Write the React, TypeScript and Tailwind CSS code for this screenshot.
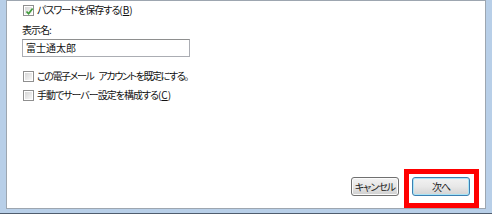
import type { ReactNode } from 'react'

const font = "font-['Noto_Sans_CJK_JP','Noto_Sans',sans-serif] [font-feature-settings:'palt']"

function Check({ checked }: { checked?: boolean }) {
  return (
    <span className="relative w-[11px] h-[11px] shrink-0 border border-[#8f8f8f] bg-white p-[1px]">
      <span className="block w-full h-full bg-gradient-to-br from-[#d6d6d6] to-[#f8f8f8]" />
      {checked && (
        <svg className="absolute left-[1px] top-[1px]" width="9" height="9" viewBox="0 0 9 9">
          <path d="M1.5 4.5 L3.6 6.8 L7.6 1.6" fill="none" stroke="#3f9b3a" strokeWidth="1.7" />
        </svg>
      )}
    </span>
  )
}

function CheckRow({ checked, children }: { checked?: boolean; children: ReactNode }) {
  return (
    <label className="flex items-center h-[18px] ml-[1px] gap-[3px]">
      <Check checked={checked} />
      <span className="leading-none whitespace-nowrap">{children}</span>
    </label>
  )
}

// accelerator key, e.g. (B)
function Key({ k }: { k: string }) {
  return (
    <span className="tracking-normal">
      (<span className="underline">{k}</span>)
    </span>
  )
}

function Btn({ children, main }: { children: ReactNode; main?: boolean }) {
  return (
    <button
      className={
        main
          ? 'w-[58px] h-[19px] whitespace-nowrap rounded-[3px] border border-[#3c7fb1] bg-gradient-to-b from-[#f2f2f2] via-[#e8e8e8] to-[#d3d3d3] shadow-[inset_0_0_0_1px_#a8e4f7] text-[10px] leading-none text-[#222]'
          : 'w-[48px] h-[19px] whitespace-nowrap rounded-[3px] border border-[#707070] bg-gradient-to-b from-[#f2f2f2] via-[#e6e6e6] to-[#cfcfcf] shadow-[inset_0_0_0_1px_#fbfbfb] text-[10px] leading-none text-[#222]'
      }
    >
      {children}
    </button>
  )
}

export default function App() {
  return (
    <div className={`w-[492px] h-[214px] overflow-hidden flex px-[6px] pb-[4px] bg-[#b8cfe8] border-b border-[#4f5d6e] ${font}`}>
      <div className="flex-1 flex flex-col border border-[#9da6b0] bg-white text-[10px] tracking-[-1px] text-[#111] pl-[15px] pr-[15px] pb-[12px]">
        <CheckRow checked>
          パスワードを保存する<Key k="B" />
        </CheckRow>
        <div className="h-[19px] mt-[1px] flex items-center leading-none">表示名:</div>
        <div className="w-[168px] h-[18px] border border-[#abadb3] border-t-[#8e8f8f] flex items-center pl-[3px] tracking-normal leading-none">
          富士通太郎
        </div>
        <div className="mt-[10px] flex flex-col gap-[1px]">
          <CheckRow>
            <span className="tracking-[-1.4px]">
              この電子メール<span className="inline-block w-[5px]" />アカウントを既定にする。
            </span>
          </CheckRow>
          <CheckRow>
            手動でサーバー設定を構成する<Key k="C" />
          </CheckRow>
        </div>
        <div className="mt-auto flex justify-end gap-[13px]">
          <Btn>キャンセル</Btn>
          <span className="relative flex">
            <Btn main>次へ</Btn>
            <span className="absolute -left-[8px] -top-[8px] -right-[9px] -bottom-[12px] border-[5px] border-[#f00]" />
          </span>
        </div>
      </div>
    </div>
  )
}
